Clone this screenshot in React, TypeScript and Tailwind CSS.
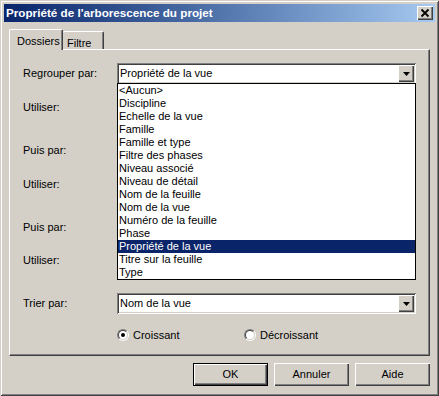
import { FC } from "react";

const RAISED =
  "shadow-[inset_1px_1px_#ffffff,inset_-1px_-1px_#404040,inset_-2px_-2px_#808080]";
const SUNKEN =
  "shadow-[inset_1px_1px_#808080,inset_-1px_-1px_#ffffff,inset_2px_2px_#404040,inset_-2px_-2px_#d4d0c8]";

const OPTIONS = [
  "<Aucun>",
  "Discipline",
  "Echelle de la vue",
  "Famille",
  "Famille et type",
  "Filtre des phases",
  "Niveau associé",
  "Niveau de détail",
  "Nom de la feuille",
  "Nom de la vue",
  "Numéro de la feuille",
  "Phase",
  "Propriété de la vue",
  "Titre sur la feuille",
  "Type",
];

const DropArrow: FC = () => (
  <div
    className={`absolute right-[2px] top-[2px] w-[16px] h-[17px] bg-[#d4d0c8] flex items-center justify-center ${RAISED}`}
  >
    <svg width="7" height="4" viewBox="0 0 7 4">
      <path d="M0 0h7L3.5 4z" fill="#000" />
    </svg>
  </div>
);

const Combo: FC<{ value?: string; open?: boolean }> = ({ value = "", open }) => (
  <div className={`relative w-[299px] h-[21px] bg-white ${SUNKEN}`}>
    <span className="absolute left-[3px] top-[3px] leading-[15px]">{value}</span>
    <DropArrow />
    {open && (
      <div className="absolute left-0 top-[20px] z-20 w-[299px] border border-black bg-white flex flex-col">
        {OPTIONS.map((o) => (
          <div
            key={o}
            className={`h-[13px] leading-[13px] pl-[1px] whitespace-nowrap ${
              o === value ? "bg-[#0a246a] text-white" : ""
            }`}
          >
            {o}
          </div>
        ))}
      </div>
    )}
  </div>
);

const Row: FC<{ label: string; mt: string; children: React.ReactNode }> = ({
  label,
  mt,
  children,
}) => (
  <div className={`flex items-center ${mt}`}>
    <span className="w-[94px] shrink-0">{label}</span>
    {children}
  </div>
);

const Radio: FC<{ checked?: boolean; label: string }> = ({ checked, label }) => (
  <div className="flex items-center gap-[4px]">
    <div className="relative w-[12px] h-[12px] rounded-full border border-t-[#808080] border-l-[#808080] border-b-white border-r-white">
      <div className="w-full h-full rounded-full bg-white border border-t-[#404040] border-l-[#404040] border-b-[#d4d0c8] border-r-[#d4d0c8] flex items-center justify-center">
        {checked && <div className="w-[4px] h-[4px] rounded-full bg-black" />}
      </div>
    </div>
    <span>{label}</span>
  </div>
);

const PushButton: FC<{ label: string; isDefault?: boolean }> = ({ label, isDefault }) => (
  <div
    className={`w-[75px] h-[23px] flex items-center justify-center bg-[#d4d0c8] ${
      isDefault ? "border border-black" : ""
    } ${RAISED}`}
  >
    {label}
  </div>
);

export default function App() {
  return (
    <div className="w-[439px] h-[396px] bg-[#d4d0c8] p-[4px] text-[11px] text-black font-['Liberation_Sans',Arial,sans-serif] shadow-[inset_1px_1px_#d4d0c8,inset_-1px_-1px_#404040,inset_2px_2px_#ffffff,inset_-2px_-2px_#808080]">
      {/* Title bar */}
      <div className="h-[18px] flex items-center justify-between pl-[2px] pr-[2px] bg-gradient-to-r from-[#0a246a] to-[#a6caf0]">
        <span className="text-white font-bold text-[11.7px]">Propriété de l'arborescence du projet</span>
        <div className={`w-[16px] h-[14px] bg-[#d4d0c8] flex items-center justify-center ${RAISED}`}>
          <svg width="16" height="14" viewBox="0 0 16 14">
            <path d="M4.5 3.5l7 7M11.5 3.5l-7 7" stroke="#000" strokeWidth="1.8" />
          </svg>
        </div>
      </div>

      <div className="px-[5px] pt-[7px]">
        {/* Tabs */}
        <div className="flex items-end h-[20px] relative z-10">
          <div className="h-[21px] w-[54px] -mb-[1px] bg-[#d4d0c8] rounded-t-[2px] border-t border-l border-white shadow-[inset_-1px_0_#808080] border-r border-r-[#404040] pl-[7px] pt-[3px]">
            Dossiers
          </div>
          <div className="h-[18px] w-[41px] bg-[#d4d0c8] rounded-t-[2px] border-t border-white shadow-[inset_-1px_0_#808080] border-r border-r-[#404040] pl-[4px] pt-[3px]">
            Filtre
          </div>
        </div>

        {/* Panel */}
        <div className="h-[307px] border border-t-white border-l-white border-r-[#404040] border-b-[#404040] shadow-[inset_-1px_-1px_#808080] pl-[13px] pt-[13px] flex flex-col">
          <Row label="Regrouper par:" mt="mt-0">
            <div className="relative z-20">
              <Combo value="Propriété de la vue" open />
            </div>
          </Row>
          <Row label="Utiliser:" mt="mt-[13px]">
            <Combo />
          </Row>
          <Row label="Puis par:" mt="mt-[22px]">
            <Combo />
          </Row>
          <Row label="Utiliser:" mt="mt-[13px]">
            <Combo />
          </Row>
          <Row label="Puis par:" mt="mt-[22px]">
            <Combo />
          </Row>
          <Row label="Utiliser:" mt="mt-[12px]">
            <Combo />
          </Row>
          <Row label="Trier par:" mt="mt-[22px]">
            <Combo value="Nom de la vue" />
          </Row>
          <div className="flex mt-[13px] pl-[94px]">
            <div className="w-[127px]">
              <Radio checked label="Croissant" />
            </div>
            <Radio label="Décroissant" />
          </div>
        </div>

        {/* Buttons */}
        <div className="flex justify-end gap-[6px] mt-[7px]">
          <PushButton label="OK" isDefault />
          <PushButton label="Annuler" />
          <PushButton label="Aide" />
        </div>
      </div>
    </div>
  );
}
